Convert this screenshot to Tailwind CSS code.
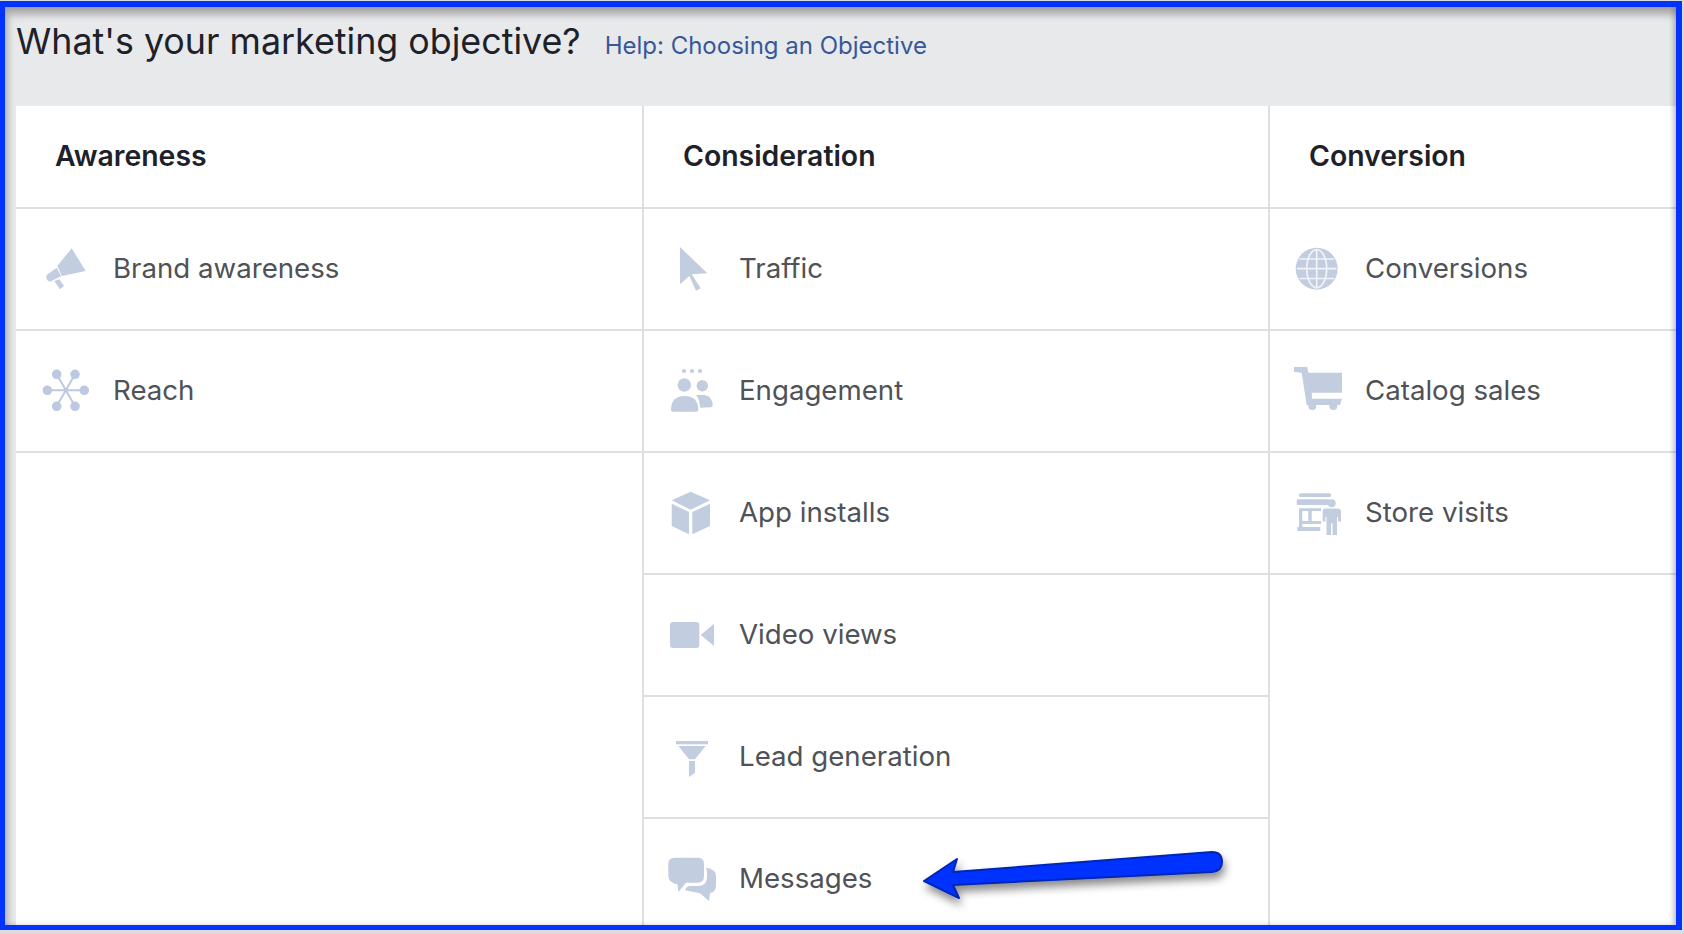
<!DOCTYPE html>
<html lang="en">
<head>
<meta charset="utf-8">
<title>Marketing objective</title>
<script src="https://cdn.jsdelivr.net/npm/@tailwindcss/browser@4"></script>
</head>
<body class="bg-white">
<div class="relative h-[934px] w-[1684px] overflow-hidden bg-[#dcdcdc] pt-px font-['Inter',sans-serif]">
  <div class="relative h-[929px] w-[1682px] overflow-hidden border-t-[6px] border-r-[6px] border-b-[5px] border-l-[5px] border-[#0433ff] bg-[#e8e9eb] pl-[11px]">

    <!-- header -->
    <div class="flex h-[99px] items-start pt-[12px]">
      <h1 class="text-[35.8px] leading-[44px] font-normal text-[#1d2129]">What's your marketing objective?</h1>
      <a class="ml-[24px] pt-[12px] text-[24px] leading-[30px] text-[#365899]">Help: Choosing an Objective</a>
    </div>

    <!-- columns -->
    <div class="grid h-[826px] grid-cols-[628px_626px_1fr] bg-white">

      <div class="border-r-2 border-[#dddfe2]">
        <div class="flex h-[103px] items-center border-b-2 border-[#dddfe2] pl-[39px] text-[28.4px] font-semibold text-[#1d2129]">Awareness</div>
        <div class="flex h-[122px] items-center border-b-2 border-[#dddfe2] pl-[20px] text-[27.65px] text-[#4f5257]">
          <svg class="mr-[17px] size-[60px] fill-[#c3cde0]" viewBox="0 0 60 60">
            <path d="M35.7 9.3L49.7 32L25.7 37L21.3 27Z"/>
            <path d="M10.7 36L20.7 28.7L25 37.3L14 42.7Q9 41 10.7 36Z"/>
            <path d="M18.3 42L23.3 40.3L28 47L24 50.3Z"/>
          </svg>
          Brand awareness
        </div>
        <div class="flex h-[122px] items-center border-b-2 border-[#dddfe2] pl-[20px] text-[27.65px] text-[#4f5257]">
          <svg class="mr-[17px] size-[60px] fill-[#bcc9e0] stroke-[#bcc9e0]" viewBox="0 0 60 60" stroke-width="2">
            <path d="M11.3 29.3H48.3M20.7 13.3L39 45.3M39 13.3L20.7 45.3"/>
            <circle cx="11.3" cy="29.3" r="3.8"/><circle cx="48.3" cy="29.3" r="3.8"/>
            <circle cx="20.7" cy="13.3" r="3.8"/><circle cx="39" cy="13.3" r="3.8"/>
            <circle cx="20.7" cy="45.3" r="3.8"/><circle cx="39" cy="45.3" r="3.8"/>
          </svg>
          Reach
        </div>
      </div>

      <div class="border-r-2 border-[#dddfe2]">
        <div class="flex h-[103px] items-center border-b-2 border-[#dddfe2] pl-[39px] text-[28.4px] font-semibold text-[#1d2129]">Consideration</div>
        <div class="flex h-[122px] items-center border-b-2 border-[#dddfe2] pl-[18px] text-[27.65px] text-[#4f5257]">
          <svg class="mr-[17px] size-[60px] fill-[#c3cde0]" viewBox="0 0 60 60">
            <path d="M18 8L45.3 34.3L29.7 35.3L38.7 49.3L34 51.7L27.3 37L18 45.3Z"/>
          </svg>
          Traffic
        </div>
        <div class="flex h-[122px] items-center border-b-2 border-[#dddfe2] pl-[18px] text-[27.65px] text-[#4f5257]">
          <svg class="mr-[17px] size-[60px] fill-[#c3cde0]" viewBox="0 0 60 60">
            <circle cx="22" cy="10" r="2"/><circle cx="30" cy="10" r="2"/><circle cx="38" cy="10" r="2"/>
            <circle cx="22.3" cy="24" r="6.7"/><circle cx="40.3" cy="24.7" r="5.7"/>
            <path d="M9 49Q9 35 22.5 35Q36.3 35 36.3 49Q36.3 50.7 34 50.7H11Q9 50.7 9 49Z"/>
            <path d="M34 34H42Q50.7 35 50.7 45Q50.7 46 49 46.3L38 46.7Q38 39 34 34Z"/>
          </svg>
          Engagement
        </div>
        <div class="flex h-[122px] items-center border-b-2 border-[#dddfe2] pl-[18px] text-[27.65px] text-[#4f5257]">
          <svg class="mr-[17px] size-[60px] fill-[#c3cde0]" viewBox="0 0 60 60">
            <path d="M28.7 8.7L48 17.3L28.7 26.7L9.7 17.3Z"/>
            <path d="M9.7 20.7L27 29V51.3L9.7 43Z"/>
            <path d="M30.3 29L48 20.7V43L30.3 51.3Z"/>
          </svg>
          App installs
        </div>
        <div class="flex h-[122px] items-center border-b-2 border-[#dddfe2] pl-[18px] text-[27.65px] text-[#4f5257]">
          <svg class="mr-[17px] size-[60px] fill-[#c3cde0]" viewBox="0 0 60 60">
            <rect x="8" y="17" width="29.3" height="26" rx="3"/>
            <path d="M52 18.7V41L38.7 30Z"/>
          </svg>
          Video views
        </div>
        <div class="flex h-[122px] items-center border-b-2 border-[#dddfe2] pl-[18px] text-[27.65px] text-[#4f5257]">
          <svg class="mr-[17px] size-[60px] fill-[#c3cde0]" viewBox="0 0 60 60">
            <path d="M14 14H46V17.3H14Z"/>
            <path d="M16.3 19H43.7L33 32.3H27Z"/>
            <path d="M27 34H33V45.7L27 50Z"/>
          </svg>
          Lead generation
        </div>
        <div class="flex h-[122px] items-center border-b-2 border-[#dddfe2] pl-[18px] text-[27.65px] text-[#4f5257]">
          <svg class="mr-[17px] size-[60px] fill-[#c3cde0]" viewBox="0 0 60 60">
            <path d="M13 8.7H36Q42 8.7 42 15V27Q42 33.7 36 33.7H24L16.3 43L15.5 35.5Q6.3 33.7 6.3 27V15Q6.3 8.7 13 8.7Z"/>
            <path d="M44 18.7Q54 20 54 27V36Q54 43 48 44L47 52L38 44.3L23 41.3Q24 38 27 37H36Q44 37 45 29V22Z"/>
          </svg>
          Messages
        </div>
      </div>

      <div>
        <div class="flex h-[103px] items-center border-b-2 border-[#dddfe2] pl-[39px] text-[28.4px] font-semibold text-[#1d2129]">Conversion</div>
        <div class="flex h-[122px] items-center border-b-2 border-[#dddfe2] pl-[17px] text-[27.65px] text-[#4f5257]">
          <svg class="mr-[18px] size-[60px]" viewBox="0 0 60 60">
            <circle cx="29.7" cy="29.7" r="21" fill="#c3cde0"/>
            <g fill="none" stroke="#f1f3f8" stroke-width="1.7">
              <ellipse cx="29.7" cy="29.7" rx="10" ry="19"/>
              <path d="M29.7 10V49.5M10 29.7H49.5M12.5 20H47M12.5 39.5H47"/>
            </g>
          </svg>
          Conversions
        </div>
        <div class="flex h-[122px] items-center border-b-2 border-[#dddfe2] pl-[17px] text-[27.65px] text-[#4f5257]">
          <svg class="mr-[18px] size-[60px] fill-[#c3cde0]" viewBox="0 0 60 60">
            <path d="M7 6H20.3L21.3 11.7H55V31.7H24.7L25 37.7H55L53 44H19.7L14.7 11.7L7 11Z"/>
            <circle cx="25.3" cy="45" r="4"/><circle cx="46.3" cy="45" r="4"/>
          </svg>
          Catalog sales
        </div>
        <div class="flex h-[122px] items-center border-b-2 border-[#dddfe2] pl-[17px] text-[27.65px] text-[#4f5257]">
          <svg class="mr-[18px] size-[60px] fill-[#c3cde0]" viewBox="0 0 60 60">
            <rect x="12" y="10.3" width="32" height="3.7" rx="1.5"/>
            <rect x="9.7" y="16.3" width="33" height="5.7" rx="1"/>
            <path d="M12 25.3H34V28H24.7V38H34V41H15.3V44H12ZM15.3 28V38H21.3V28Z"/>
            <rect x="10.3" y="44" width="23" height="4" rx="1"/>
            <circle cx="44.7" cy="20.3" r="4"/>
            <path d="M38 25.5H51Q54 25.5 54 28.5V38.5H51V34H50V52H45.5V40.5H44V52H39.5V34H38.5V38.5H35.7V28.5Q35.7 25.5 38 25.5Z"/>
          </svg>
          Store visits
        </div>
      </div>
    </div>

    <!-- inner shadow of the frame -->
    <div class="pointer-events-none absolute inset-0 shadow-[inset_3px_8px_7px_rgba(0,0,0,0.26),inset_-3px_0_5px_rgba(0,0,0,0.2)]"></div>
  </div>

  <!-- annotation arrow -->
  <svg class="pointer-events-none absolute top-0 left-0 h-[934px] w-[1684px]" viewBox="0 0 1684 934">
    <defs>
      <filter id="arrow-shadow" x="-10%" y="-50%" width="120%" height="220%">
        <feDropShadow dx="2" dy="6" stdDeviation="4" flood-color="#000" flood-opacity="0.45"/>
      </filter>
    </defs>
    <path d="M924 881L957 859L953 872L1212 852Q1222 852 1222 862Q1222 871 1212 872L953 885L959 898Z" fill="#0433ff" stroke="#0226b5" stroke-width="2" stroke-linejoin="round" filter="url(#arrow-shadow)"/>
  </svg>
</div>
</body>
</html>
